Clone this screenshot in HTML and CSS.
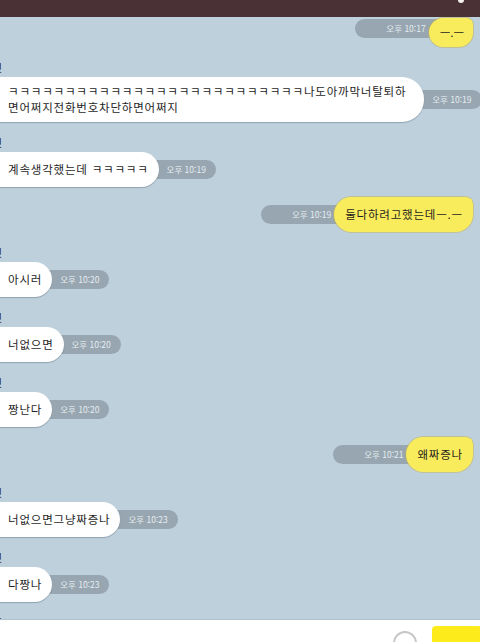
FILE: index.html
```html
<!DOCTYPE html>
<html lang="ko">
<head>
    <meta charset="UTF-8">
    <meta name="viewport" content="width=device-width, initial-scale=1.0">
    <title>채팅</title>
    <link rel="stylesheet" href="styles.css">
</head>
<body>
    <div class="app">
        <div class="topbar"><span class="dot"></span></div>

        <div class="chat">
            <div class="msg out first">
                <div class="line">
                    <span class="time">오후 10:17</span>
                    <div class="bubble">ㅡ.ㅡ</div>
                </div>
            </div>

            <div class="msg in">
                <div class="name">싯</div>
                <div class="line">
                    <div class="bubble multi">ㅋㅋㅋㅋㅋㅋㅋㅋㅋㅋㅋㅋㅋㅋㅋㅋㅋㅋㅋㅋㅋㅋㅋㅋㅋㅋ나도아까막너탈퇴하<br>면어쩌지전화번호차단하면어쩌지</div>
                    <span class="time">오후 10:19</span>
                </div>
            </div>

            <div class="msg in">
                <div class="name">싯</div>
                <div class="line">
                    <div class="bubble">계속생각했는데 ㅋㅋㅋㅋㅋ</div>
                    <span class="time">오후 10:19</span>
                </div>
            </div>

            <div class="msg out">
                <div class="line">
                    <span class="time">오후 10:19</span>
                    <div class="bubble">둘다하려고했는데ㅡ.ㅡ</div>
                </div>
            </div>

            <div class="msg in">
                <div class="name">싯</div>
                <div class="line">
                    <div class="bubble">아시러</div>
                    <span class="time">오후 10:20</span>
                </div>
            </div>

            <div class="msg in">
                <div class="name">싯</div>
                <div class="line">
                    <div class="bubble">너없으면</div>
                    <span class="time">오후 10:20</span>
                </div>
            </div>

            <div class="msg in">
                <div class="name">싯</div>
                <div class="line">
                    <div class="bubble">짱난다</div>
                    <span class="time">오후 10:20</span>
                </div>
            </div>

            <div class="msg out">
                <div class="line">
                    <span class="time">오후 10:21</span>
                    <div class="bubble">왜짜증나</div>
                </div>
            </div>

            <div class="msg in">
                <div class="name">싯</div>
                <div class="line">
                    <div class="bubble">너없으면그냥짜증나</div>
                    <span class="time">오후 10:23</span>
                </div>
            </div>

            <div class="msg in">
                <div class="name">싯</div>
                <div class="line">
                    <div class="bubble">다짱나</div>
                    <span class="time">오후 10:23</span>
                </div>
            </div>

            <div class="msg in">
                <div class="name">싯</div>
            </div>
        </div>

        <div class="inputbar">
            <span class="emoji-btn"></span>
            <span class="send-btn"></span>
        </div>
    </div>
</body>
</html>
```

FILE: styles.css
```css
html, body {
    margin: 0;
    padding: 0;
}
body {
    font-family: "Noto Sans CJK KR", "Noto Sans", sans-serif;
    background-color: #bed0dc;
    color: #1e1e1e;
}
.app {
    width: 480px;
    height: 642px;
    display: flex;
    flex-direction: column;
    overflow: hidden;
}
.topbar {
    height: 17px;
    flex-shrink: 0;
    background-color: #4a3135;
    display: flex;
    justify-content: flex-end;
    padding-right: 16px;
    position: relative;
    z-index: 2;
}
.dot {
    width: 6px;
    height: 6px;
    margin-top: -3px;
    border-radius: 50%;
    background-color: #f4f0f0;
}
.chat {
    flex: 1;
    overflow: hidden;
    display: flex;
    flex-direction: column;
    padding-top: 1px;
}
.msg {
    margin-top: 10px;
}
.msg.first {
    margin-top: 0;
}
.name {
    height: 20px;
    line-height: 20px;
    font-size: 11px;
    color: #2e2e2e;
    margin-left: -8px;
}
.line {
    display: flex;
    align-items: center;
}
.bubble {
    position: relative;
    z-index: 1;
    font-size: 11.5px;
    letter-spacing: 0.8px;
    line-height: 16px;
    height: 35px;
    box-sizing: border-box;
    padding: 9px 10px 10px;
    border-radius: 18px;
    white-space: nowrap;
}
.time {
    position: relative;
    z-index: 0;
    height: 19px;
    line-height: 19px;
    border-radius: 10px;
    background-color: #97a6b1;
    color: #e6ecf0;
    font-size: 8.5px;
    white-space: nowrap;
}

/* received */
.in .bubble {
    background-color: #ffffff;
    margin-left: -20px;
    padding-left: 28px;
    box-shadow: 0 1px 1px rgba(60, 80, 95, 0.35);
}
.in .bubble.multi {
    height: 45px;
    padding-top: 6px;
    padding-bottom: 7px;
    padding-right: 18px;
    border-radius: 22px;
}
.in .time {
    margin-left: -20px;
    padding: 0 10px 0 28px;
}

/* sent */
.out .line {
    justify-content: flex-end;
}
.out .bubble {
    background-color: #f9ec5c;
    margin-right: 7px;
    padding-left: 11px;
    padding-right: 10px;
    border-radius: 18px 8px 18px 18px;
    box-shadow: 0 0 0 1px rgba(190, 175, 70, 0.45);
}
.out .bubble::after {
    content: "";
    position: absolute;
    top: 0;
    right: -5px;
    width: 0;
    height: 0;
    border-left: 8px solid #f9ec5c;
    border-top: 6px solid transparent;
    border-bottom: 6px solid transparent;
    transform: rotate(-40deg);
    transform-origin: left bottom;
}
.out .time {
    margin-right: -23px;
    padding: 0 26px 0 31px;
}
.first .line {
    align-items: flex-start;
}
.first .bubble {
    height: 29px;
    padding-top: 6px;
    padding-left: 11px;
    padding-right: 9px;
    letter-spacing: 0;
}
.first .time {
    margin-top: 1px;
}

/* input */
.inputbar {
    height: 22px;
    flex-shrink: 0;
    background-color: #ffffff;
    border-top: 1px solid #b0c1cc;
    display: flex;
    align-items: flex-start;
    justify-content: flex-end;
    position: relative;
    z-index: 2;
}
.emoji-btn {
    width: 20px;
    height: 20px;
    margin-top: 11px;
    margin-right: 15px;
    border: 2px solid #c6c6c6;
    border-radius: 50%;
}
.send-btn {
    width: 50px;
    height: 20px;
    margin-top: 6px;
    margin-right: -2px;
    border-radius: 4px;
    background-color: #feeb1c;
}
```
